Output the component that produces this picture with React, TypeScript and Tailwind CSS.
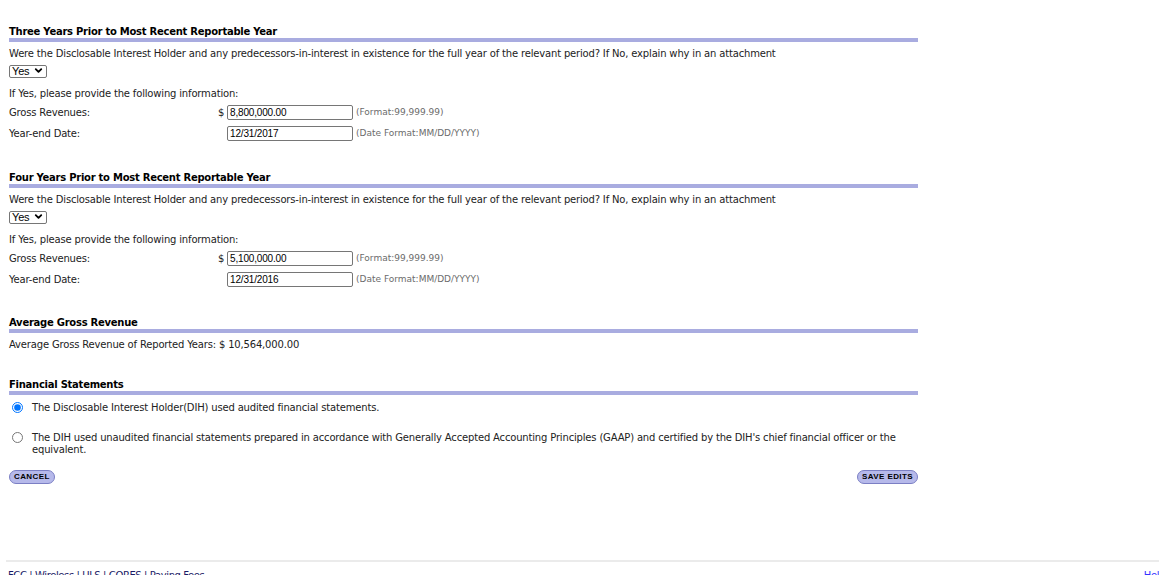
import { ChevronDown } from "lucide-react"

const font = "font-['DejaVu_Sans',Verdana,sans-serif]"

function Heading({ title, className }: { title: string; className?: string }) {
  return (
    <div className={className}>
      <h2 className="h-[14px] pt-[1px] text-[10px] font-bold leading-[13px] tracking-[-0.26px] text-black">{title}</h2>
      <div className="h-[4px] bg-[#a9ace0]" />
    </div>
  )
}

function YesSelect() {
  return (
    <div className="relative mt-[3px] h-[13px] w-[38px]">
      <select
        defaultValue="Yes"
        className="h-[13px] w-[38px] appearance-none rounded-[2px] border border-[#767676] bg-white pl-[2px] font-['Liberation_Sans',Arial,sans-serif] text-[11px] leading-[11px] text-black"
      >
        <option>Yes</option>
        <option>No</option>
      </select>
      <ChevronDown className="pointer-events-none absolute right-[2px] top-[1px] h-[11px] w-[13px] text-black" strokeWidth={4} />
    </div>
  )
}

function Field({ label, dollar, value, hint, className }: { label: string; dollar?: boolean; value: string; hint: string; className?: string }) {
  return (
    <div className={`flex h-[15px] items-center ${className ?? ""}`}>
      <span className="w-[209px]">{label}</span>
      <span className="w-[9px] text-left">{dollar ? "$" : ""}</span>
      <input
        readOnly
        value={value}
        className="h-[15px] w-[126px] rounded-[2px] border border-[#767676] px-[2px] font-['Liberation_Sans',Arial,sans-serif] text-[10px] text-black outline-none"
      />
      <span className="ml-[3px] text-[9px] tracking-normal text-[#6b6b6b]">{hint}</span>
    </div>
  )
}

function YearSection({ title, revenue, date, className }: { title: string; revenue: string; date: string; className?: string }) {
  return (
    <section className={className}>
      <Heading title={title} />
      <p className="mt-[5px] leading-[14px]">
        Were the Disclosable Interest Holder and any predecessors-in-interest in existence for the full year of the relevant period? If No, explain why in an attachment
      </p>
      <YesSelect />
      <p className="mt-[10px] leading-[14px]">If Yes, please provide the following information:</p>
      <Field className="mt-[4px]" label="Gross Revenues:" dollar value={revenue} hint="(Format:99,999.99)" />
      <Field className="mt-[6px]" label="Year-end Date:" value={date} hint="(Date Format:MM/DD/YYYY)" />
    </section>
  )
}

function PillButton({ label }: { label: string }) {
  return (
    <button className="flex h-[14px] items-center rounded-full border border-[#7b7fc4] bg-[#b6b9ea] px-[4px] font-['Liberation_Sans',Arial,sans-serif] text-[8px] font-bold leading-none tracking-[0.4px] text-black">
      {label}
    </button>
  )
}

export default function App() {
  return (
    <div className={`h-[575px] w-[1159px] overflow-hidden bg-white text-[10px] tracking-[-0.17px] text-[#222] ${font}`}>
      <div className="w-[918px] pl-[9px] pt-[24px]">
        <YearSection title="Three Years Prior to Most Recent Reportable Year" revenue="8,800,000.00" date="12/31/2017" />
        <YearSection className="mt-[29px]" title="Four Years Prior to Most Recent Reportable Year" revenue="5,100,000.00" date="12/31/2016" />

        <Heading className="mt-[28px]" title="Average Gross Revenue" />
        <p className="mt-[5px] leading-[14px]">Average Gross Revenue of Reported Years: $ 10,564,000.00</p>

        <Heading className="mt-[25px]" title="Financial Statements" />
        <label className="mt-[7px] flex items-start">
          <input type="radio" name="fs" defaultChecked className="ml-[3px] mt-0 h-[11px] w-[11px] shrink-0 accent-[#0075ff]" />
          <span className="ml-[9px] leading-[12px]">The Disclosable Interest Holder(DIH) used audited financial statements.</span>
        </label>
        <label className="mt-[18px] flex items-start">
          <input type="radio" name="fs" className="ml-[3px] mt-0 h-[11px] w-[11px] shrink-0" />
          <span className="ml-[9px] leading-[12px]">
            The DIH used unaudited financial statements prepared in accordance with Generally Accepted Accounting Principles (GAAP) and certified by the DIH's chief financial officer or the equivalent.
          </span>
        </label>

        <div className="mt-[14px] flex justify-between">
          <PillButton label="CANCEL" />
          <PillButton label="SAVE EDITS" />
        </div>
      </div>

      <footer className="ml-[6px] mt-[76px] border-t-2 border-[#ebebeb] pt-[7px]">
        <div className="-mr-[6px] flex justify-between pl-[2px] text-[10px] leading-[14px] tracking-[-0.4px]">
          <div className="text-[#1a1a66]">
            <a className="text-[#1a1a66]">FCC</a> | <a className="text-[#1a1a66]">Wireless</a> | <a className="text-[#1a1a66]">ULS</a> | <a className="text-[#1a1a66]">CORES</a> | <a className="text-[#1a1a66]">Paying Fees</a>
          </div>
          <a className="text-[#3333ff]">Help</a>
        </div>
      </footer>
    </div>
  )
}
